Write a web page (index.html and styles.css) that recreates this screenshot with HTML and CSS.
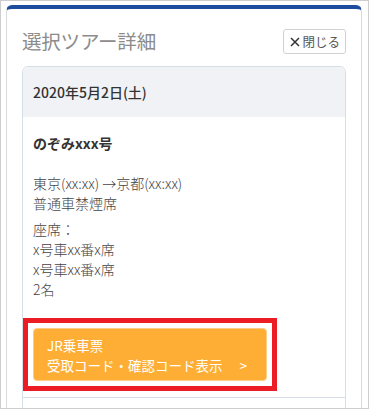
FILE: index.html
```html
<!DOCTYPE html>
<html lang="ja">
<head>
<meta charset="utf-8">
<link rel="stylesheet" href="styles.css">
</head>
<body>
<div class="frame">
  <div class="panel">
    <div class="panel-head">
      <h1 class="title">選択ツアー詳細</h1>
      <button class="close-btn">
        <svg class="x-icon" width="10" height="10" viewBox="0 0 10 10"><path d="M1 1 L9 9 M9 1 L1 9" stroke="#333" stroke-width="1.5" fill="none"/></svg>
        <span>閉じる</span>
      </button>
    </div>
    <div class="card">
      <div class="card-head">2020年5月2日(土)</div>
      <div class="card-body">
        <p class="train">のぞみxxx号</p>
        <p class="block">東京(xx:xx) →京都(xx:xx)<br>普通車禁煙席</p>
        <p class="block seats">座席：<br>x号車xx番x席<br>x号車xx番x席<br>2名</p>
        <div class="highlight">
          <a class="ticket-btn">
            <span>JR乗車票</span>
            <span>受取コード・確認コード表示<span class="chev">&gt;</span></span>
          </a>
        </div>
      </div>
      <div class="card-rest"></div>
    </div>
  </div>
</div>
</body>
</html>
```
FILE: styles.css
```css
* { box-sizing: border-box; }
html, body { margin: 0; padding: 0; }
body {
  font-family: "Noto Sans CJK JP", "Noto Sans", sans-serif;
  color: #333;
  background: #fff;
}
.frame {
  width: 369px;
  height: 409px;
  border: 1px solid #cdcdcd;
  overflow: hidden;
  padding: 4px 6px 0 5px;
}
.panel {
  border: 1px solid #d8dadd;
  border-top: 4px solid #1c4d9e;
  border-radius: 6px 6px 0 0;
  padding: 0 15px;
  height: 420px;
}
.panel-head {
  display: flex;
  justify-content: space-between;
  align-items: center;
  padding-top: 15px;
  height: 48px;
  margin-bottom: 9px;
}
.title {
  margin: 0;
  font-size: 19.5px;
  font-weight: 400;
  color: #8c8c8c;
  line-height: 28px;
  letter-spacing: -0.2px;
}
.close-btn {
  display: flex;
  align-items: center;
  gap: 2px;
  height: 25px;
  padding: 0 5px 0 6px;
  border: 1px solid #d2d2d2;
  border-radius: 3px;
  background: #fff;
  font-family: inherit;
  font-size: 12.5px;
  color: #555;
  white-space: nowrap;
  margin-top: 2px;
}
.card {
  border: 1px solid #d6dee8;
  border-radius: 6px 6px 0 0;
  height: 360px;
}
.card-head {
  background: #f0f2f5;
  height: 50px;
  border-radius: 5px 5px 0 0;
  display: flex;
  align-items: center;
  padding-left: 10px;
  font-size: 14px;
  font-weight: 500;
  color: #333;
}
.card-body {
  padding: 16px 10px 6px;
  border-bottom: 1px solid #d6dee8;
  font-size: 14px;
  line-height: 20px;
}
.card-body p { margin: 0; }
.train { font-weight: 700; margin-bottom: 20px !important; }
.block { color: #444; font-weight: 300; }
.seats { margin-top: 6px !important; }
.highlight {
  margin: 19px 0 0 -10px;
  width: 254px;
  border: 5px solid #ec1c24;
  padding: 5px;
}
.ticket-btn {
  display: flex;
  flex-direction: column;
  justify-content: center;
  width: 234px;
  height: 53px;
  padding: 0 13px;
  background: #feae34;
  border: 1px solid #fdcd86;
  border-radius: 4px;
  color: #fff;
  font-size: 13.5px;
  line-height: 20px;
  white-space: nowrap;
}
.chev { margin-left: 17px; }
```
